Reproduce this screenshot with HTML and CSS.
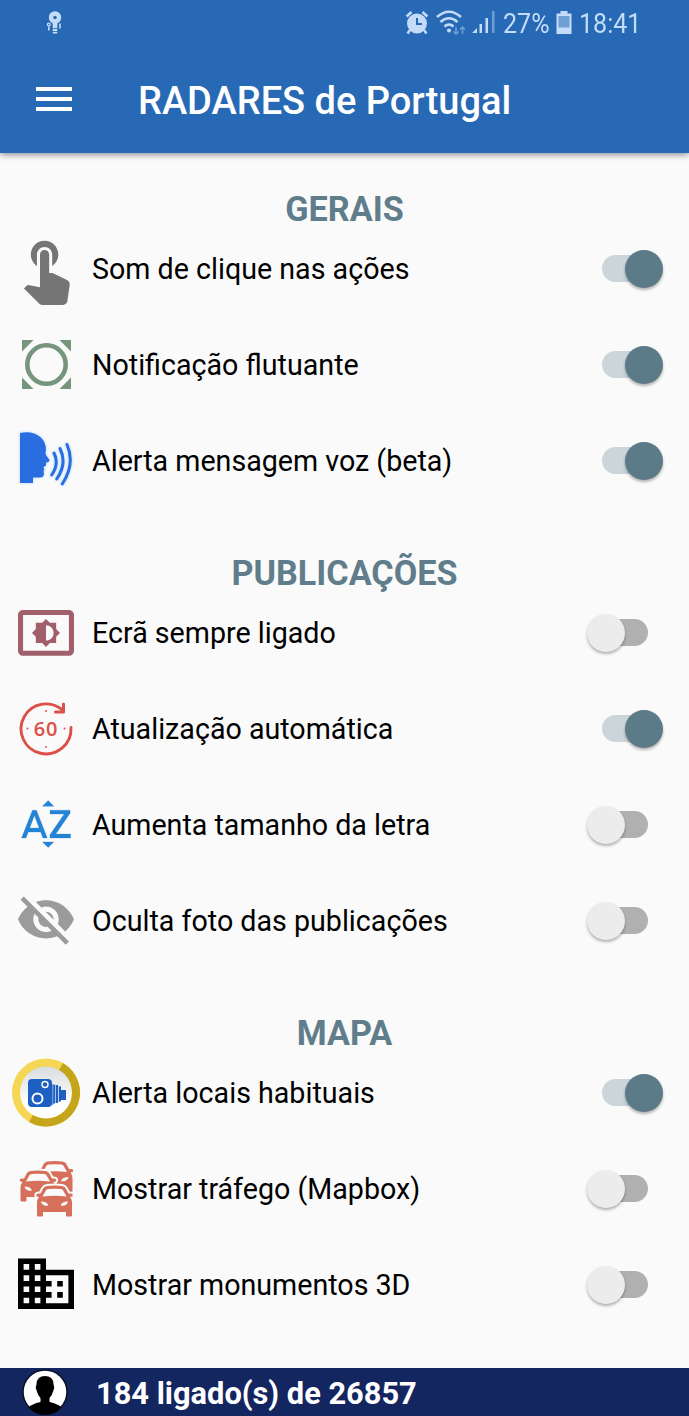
FILE: index.html
```html
<!DOCTYPE html>
<html lang="pt">
<head>
<meta charset="utf-8">
<title>RADARES de Portugal</title>
<link rel="stylesheet" href="styles.css">
</head>
<body>
<div class="app">
  <header class="header">
    <div class="status">
      <svg class="status-app" width="20" height="26" viewBox="0 0 20 26" fill="none" stroke="#c3dcf8">
        <circle cx="10" cy="7.500" r="4" stroke-width="4.400"/>
        <path d="M10 12.500v11" stroke-width="4.600"/>
        <path d="M7 18.500h6M7 21.500h6" stroke="#2869b5" stroke-width=".8"/>
        <circle cx="3.800" cy="14.500" r="1.400" stroke-width="1.400"/>
        <path d="M3.800 16.500v4M15 13.500v5" stroke-width="1.600"/>
      </svg>
      <svg width="24" height="26" viewBox="0 0 24 26" fill="none" stroke="#c3dcf8">
        <circle cx="12" cy="13.500" r="10" fill="#c3dcf8" stroke="none"/>
        <path d="M1.600 6.500 6.500 2M22.400 6.500 17.500 2" stroke-width="2.600"/>
        <path d="m5 20-2.500 3.500M19 20l2.500 3.500" stroke-width="2.500"/>
        <path d="M12 8v6h5" stroke="#2869b5" stroke-width="2"/>
      </svg>
      <svg class="status-wifi" width="32" height="26" viewBox="0 0 32 26" fill="none" stroke="#c3dcf8" stroke-width="2.600">
        <path d="M2 7q12-10.500 24 0M5.500 12q8.500-7.500 17 0M9.500 16.500q4.500-4 9 0"/>
        <circle cx="14" cy="20.500" r="2" fill="#c3dcf8" stroke="none"/>
        <path d="M21 17v7M18.500 21.500l2.500 2.500 2.500-2.500M27.500 24v-7M25 19.500l2.500-2.500 2.500 2.500" stroke="#6f9fd5" stroke-width="1.500"/>
      </svg>
      <svg width="24" height="26" viewBox="0 0 24 26" fill="#c3dcf8">
        <path d="M0 23l5-5v5zM7.500 14h2.500v9H7.500zM13.500 8H16v15h-2.500z"/>
        <path d="M20 1h2.500v22H20z" fill="#6f9fd5"/>
      </svg>
      <span class="battery">27%</span>
      <svg class="status-battery" width="16" height="26" viewBox="0 0 16 26" fill="#c3dcf8">
        <path d="M4.500 1h7v2.500h4V24H.5V3.500h4z"/>
        <path d="M2.500 6h11v11.500h-11z" fill="#6f9fd5"/>
      </svg>
      <span class="clock">18:41</span>
    </div>
    <div class="toolbar">
      <svg class="menu" width="36" height="26" viewBox="0 0 36 26" fill="#fff"><path d="M0 1h36v4H0zM0 11h36v4H0zM0 21h36v4H0z"/></svg>
      <h1 class="title">RADARES de Portugal</h1>
    </div>
  </header>

  <main class="settings">
    <section class="group">
      <h2 class="heading">GERAIS</h2>
      <div class="row">
        <svg class="icon" viewBox="0 -48 84 96" fill="#757575"><path transform="translate(9.500 -37.300) scale(3.050)" d="M9 11.240V7.500C9 6.120 10.120 5 11.500 5S14 6.120 14 7.500v3.740c1.210-.81 2-2.180 2-3.740C16 5.010 13.990 3 11.500 3S7 5.010 7 7.500c0 1.560.79 2.930 2 3.740zm9.840 4.630l-4.540-2.260c-.17-.07-.35-.11-.54-.11H13v-6c0-.83-.67-1.500-1.500-1.500S10 6.670 10 7.500v10.740l-3.430-.72c-.08-.01-.15-.03-.24-.03-.31 0-.59.13-.79.33l-.79.8 4.940 4.940c.27.27.65.44 1.060.44h6.790c.75 0 1.330-.55 1.440-1.280l.75-5.270c.01-.07.02-.14.02-.2 0-.62-.38-1.160-.91-1.380z"/></svg>
        <span class="label">Som de clique nas ações</span><span class="switch on"></span>
      </div>
      <div class="row">
        <svg class="icon" viewBox="0 -48 84 96" fill="#75957c">
          <circle cx="46.500" cy="-.5" r="19.200" fill="none" stroke="#75957c" stroke-width="4.600"/>
          <path d="M22-25h11.500L22-13.500zM71-25v11.500L59.500-25zM22 24V12.500L33.500 24zM71 24H59.500L71 12.500z"/>
        </svg>
        <span class="label">Notificação flutuante</span><span class="switch on"></span>
      </div>
      <div class="row">
        <svg class="icon voice" viewBox="0 -48 84 96" fill="#2a6de0">
          <path d="M20-28C34-31 46-24 46-11Q45-8 46-6L49.500-1Q49.500 1 46 1.500L46 4.500 43 6.500 44.500 8 43.500 10 44 13Q43.500 16.500 40 16.500H33V22H20z"/>
          <path d="M54-8Q59.500 3 51.700 14M60-12.500Q67.500 2.500 56.700 18M67-16.500Q75.500 3 62.300 23" fill="none" stroke="#2a6de0" stroke-width="3" stroke-linecap="round"/>
        </svg>
        <span class="label">Alerta mensagem voz (beta)</span><span class="switch on"></span>
      </div>
    </section>

    <section class="group">
      <h2 class="heading">PUBLICAÇÕES</h2>
      <div class="row">
        <svg class="icon" viewBox="0 -48 84 96" fill="#a15f6c"><path transform="translate(15.450 -30.600) scale(2.545)" d="M21 3H3c-1.100 0-2 .9-2 2v14c0 1.100.9 2 2 2h18c1.100 0 2-.9 2-2V5c0-1.100-.9-2-2-2zm0 16.010H3V4.990h18v14.020zM8 16h2.500l1.500 1.500 1.500-1.500H16v-2.500l1.500-1.500-1.500-1.500V8h-2.500L12 6.500 10.500 8H8v2.500L6.500 12 8 13.500V16zm4-7c1.660 0 3 1.340 3 3s-1.340 3-3 3V9z"/></svg>
        <span class="label">Ecrã sempre ligado</span><span class="switch"></span>
      </div>
      <div class="row">
        <svg class="icon" viewBox="0 -48 84 96" fill="none" stroke="#dc5048">
          <path d="M71-1.500A25 25 0 1 1 63.500-18" stroke-width="2.900" stroke-linecap="round"/>
          <path d="M63.500-25v8h-8" stroke-width="3" stroke-linecap="round" stroke-linejoin="round"/>
          <g fill="#dc5048" stroke="none"><circle cx="46" cy="-18" r="1"/><circle cx="46" cy="18" r="1"/><circle cx="27.500" cy="-.5" r="1"/><circle cx="64.500" cy="-.5" r="1"/></g>
          <text class="sixty" x="46" y="7" text-anchor="middle">60</text>
        </svg>
        <span class="label">Atualização automática</span><span class="switch on"></span>
      </div>
      <div class="row">
        <svg class="icon" viewBox="0 -48 84 96" fill="#2483d5"><path transform="translate(17.700 -30) scale(2.420)" d="M14.940 4.660h-4.720l2.360-2.360zm-4.690 14.710h4.660l-2.330 2.330zM6.100 6.270L1.600 17.730h1.840l.92-2.450h5.110l.92 2.450h1.840L7.740 6.270H6.100zm-1.130 7.370l1.940-5.180 1.940 5.180H4.970zm10.760 2.500h6.120v1.590h-8.530v-1.290l5.920-8.560h-5.880v-1.600h8.300v1.260l-5.930 8.600z" stroke="#2483d5" stroke-width=".12"/></svg>
        <span class="label">Aumenta tamanho da letra</span><span class="switch"></span>
      </div>
      <div class="row">
        <svg class="icon" viewBox="0 -48 84 96" fill="#9b9b9b"><path transform="translate(15.450 -32.200) scale(2.545)" d="M12 7c2.760 0 5 2.240 5 5 0 .65-.13 1.260-.36 1.830l2.920 2.920c1.510-1.260 2.700-2.890 3.430-4.750-1.730-4.390-6-7.500-11-7.500-1.400 0-2.740.25-3.980.7l2.160 2.160C10.740 7.130 11.350 7 12 7zM2 4.270l2.280 2.280.46.46C3.080 8.300 1.780 10.020 1 12c1.730 4.390 6 7.500 11 7.500 1.550 0 3.030-.3 4.380-.84l.42.42L19.730 22 21 20.730 3.270 3 2 4.270zM7.530 9.800l1.550 1.550c-.05.21-.08.43-.08.65 0 1.660 1.340 3 3 3 .22 0 .44-.03.65-.08l1.550 1.550c-.67.33-1.410.53-2.200.53-2.760 0-5-2.240-5-5 0-.79.2-1.530.53-2.200zm4.310-.78l3.150 3.150.02-.16c0-1.660-1.340-3-3-3l-.17.01z"/></svg>
        <span class="label">Oculta foto das publicações</span><span class="switch"></span>
      </div>
    </section>

    <section class="group">
      <h2 class="heading">MAPA</h2>
      <div class="row">
        <svg class="icon" viewBox="0 -48 84 96">
          <defs><linearGradient id="dial" x1="0" y1="0" x2="0" y2="1"><stop offset="0" stop-color="#d9dcdf"/><stop offset=".7" stop-color="#fff"/></linearGradient></defs>
          <circle cx="46" cy="-.5" r="34" fill="#f5d755"/>
          <path d="M63-30A34 34 0 0 1 29 29z" fill="#c5a51a"/>
          <circle cx="46" cy="-.5" r="26" fill="url(#dial)"/>
          <g fill="#1e5fc2"><rect x="28" y="-14" width="24" height="28" rx="4"/><path d="M52-9l3 1v18l-3 2zM55.600-8H58V10h-2.400zM59-6.500h2V8.500h-2zM60-3h6V7h-6z"/></g>
          <g fill="#1e5fc2" stroke="#fff"><circle cx="37.500" cy="5.500" r="5" stroke-width="2"/><circle cx="45" cy="-8.500" r="3" stroke-width="1.400"/></g>
          <path d="M52.800-9v20M55.500-9v19M58.500-7v16" stroke="#a9c8ef" stroke-width=".8"/>
        </svg>
        <span class="label">Alerta locais habituais</span><span class="switch on"></span>
      </div>
      <div class="row">
        <svg class="icon" viewBox="0 -48 84 96">
          <defs>
            <g id="car">
              <path d="M3 11.500Q0 11.500 .3 9 1 7.500 4.500 8L7.500 2.500Q8.500.8 11 .5 18.500-.5 26 .5 28.500.8 29.500 2.500L32.500 8Q36 7.500 36.700 9 37 11.500 34 11.500 36 14 36 17v13q0 1-1 1h-4q-1 0-1-1v-3.500H7V30q0 1-1 1H2q-1 0-1-1V17q0-3 2-5.500z" fill="#d6705b" stroke="#fafafa" stroke-width="4" paint-order="stroke"/>
              <path d="M6.500 11 10 4.800Q10.500 3.800 12 3.600q6.500-.8 13 0 1.500.2 2 1.200L30.500 11q-12-1.500-24 0z" fill="#fafafa"/>
              <path d="M5 16q6 0 7.500 4Q6 21 5 16zM32 16q-6 0-7.500 4Q31 21 32 16z" fill="#fafafa"/>
            </g>
          </defs>
          <use href="#car" x="36.500" y="-28"/>
          <use href="#car" x="19.500" y="-18.500"/>
          <use href="#car" x="36" y="-3.500"/>
        </svg>
        <span class="label">Mostrar tráfego (Mapbox)</span><span class="switch"></span>
      </div>
      <div class="row">
        <svg class="icon" viewBox="0 -48 84 96"><path transform="translate(12.400 -34.900) scale(2.800)" d="M12 7V3H2v18h20V7H12zM6 19H4v-2h2v2zm0-4H4v-2h2v2zm0-4H4V9h2v2zm0-4H4V5h2v2zm4 12H8v-2h2v2zm0-4H8v-2h2v2zm0-4H8V9h2v2zm0-4H8V5h2v2zm10 12h-8v-2h2v-2h-2v-2h2v-2h-2V9h8v10zm-2-8h-2v2h2v-2zm0 4h-2v2h2v-2z"/></svg>
        <span class="label">Mostrar monumentos 3D</span><span class="switch"></span>
      </div>
    </section>
  </main>

  <footer class="footer">
    <svg width="48" height="48" viewBox="0 0 48 48">
      <circle cx="24" cy="24" r="22" fill="#fff" stroke="#0b1028" stroke-width="1.500"/>
      <path d="M24 8q8 0 8.500 8l.8 4-1.300 3.500Q31 28 28.500 30v4q9 2 12 5.500A22 22 0 0 1 7.500 39.500q3-3.500 12-5.500v-4Q17 28 16 23.500L14.700 20l.8-4Q16 8 24 8z"/>
    </svg>
    <span class="online">184 ligado(s) de 26857</span>
  </footer>
</div>
</body>
</html>
```
FILE: styles.css
```css
* { box-sizing: border-box; }
body { margin: 0; font-family: Roboto, sans-serif; color: #0b0b0b; background: #fafafa; }
.app { display: flex; flex-direction: column; height: 1416px; }
.header { height: 153px; flex: none; background: #2869b5; box-shadow: 0 2px 6px rgba(0, 0, 0, .4); }
.status { display: flex; align-items: center; height: 46px; padding: 0 48px 0 45px; color: #c3dcf8; font-size: 28.500px; }
.status svg { flex: none; }
.status-app { margin-right: auto; }
.status-wifi { margin-left: 6px; margin-right: 5px; }
.battery, .clock { white-space: nowrap; transform: scaleX(.88); transform-origin: left; }
.battery { width: 47px; margin: 0 6px 0 7px; }
.clock { width: 62px; margin-left: 7px; }
.toolbar { display: flex; align-items: center; height: 107px; padding: 0 36px; gap: 66px; }
.menu { margin-top: -2px; }
.title { margin: 3px 0 0; color: #fff; font-size: 38px; font-weight: 500; line-height: 44px; white-space: nowrap; }
.settings { flex: 1; }
.group { padding-top: 52px; }
.group:first-child { padding-top: 44px; }
.heading { margin: 0; height: 24px; line-height: 24px; text-align: center; color: #607d8b; font-size: 34.200px; font-weight: 700; }
.row { display: flex; align-items: center; height: 96px; padding-right: 26px; }
.icon { width: 84px; height: 96px; flex: none; }
.voice { filter: drop-shadow(0 0 1.500px #a9d2ff); }
.sixty { font: 600 20px "Open Sans", sans-serif; letter-spacing: .8px; fill: #dc5048; stroke: none; }
.label { flex: 1; padding-left: 8px; font-size: 28.650px; line-height: 36px; white-space: nowrap; color: #000; }
.switch { position: relative; flex: none; width: 76px; height: 38px; }
.switch::before { content: ""; position: absolute; left: 15px; top: 5px; width: 46px; height: 27px; border-radius: 14px; background: #b0b0b0; }
.switch::after { content: ""; position: absolute; left: 0; top: 0; width: 38px; height: 38px; border-radius: 50%; background: #ececec; box-shadow: 0 2px 3px rgba(0, 0, 0, .3); }
.switch.on::before { background: #cbd5da; }
.switch.on::after { left: 38px; background: #5c7b88; }
.footer { flex: none; display: flex; align-items: center; height: 48px; padding-left: 21px; gap: 27px; background: #14265f; color: #fff; }
.online { font-size: 30.800px; font-weight: 700; line-height: 36px; padding-top: 3px; }
```
